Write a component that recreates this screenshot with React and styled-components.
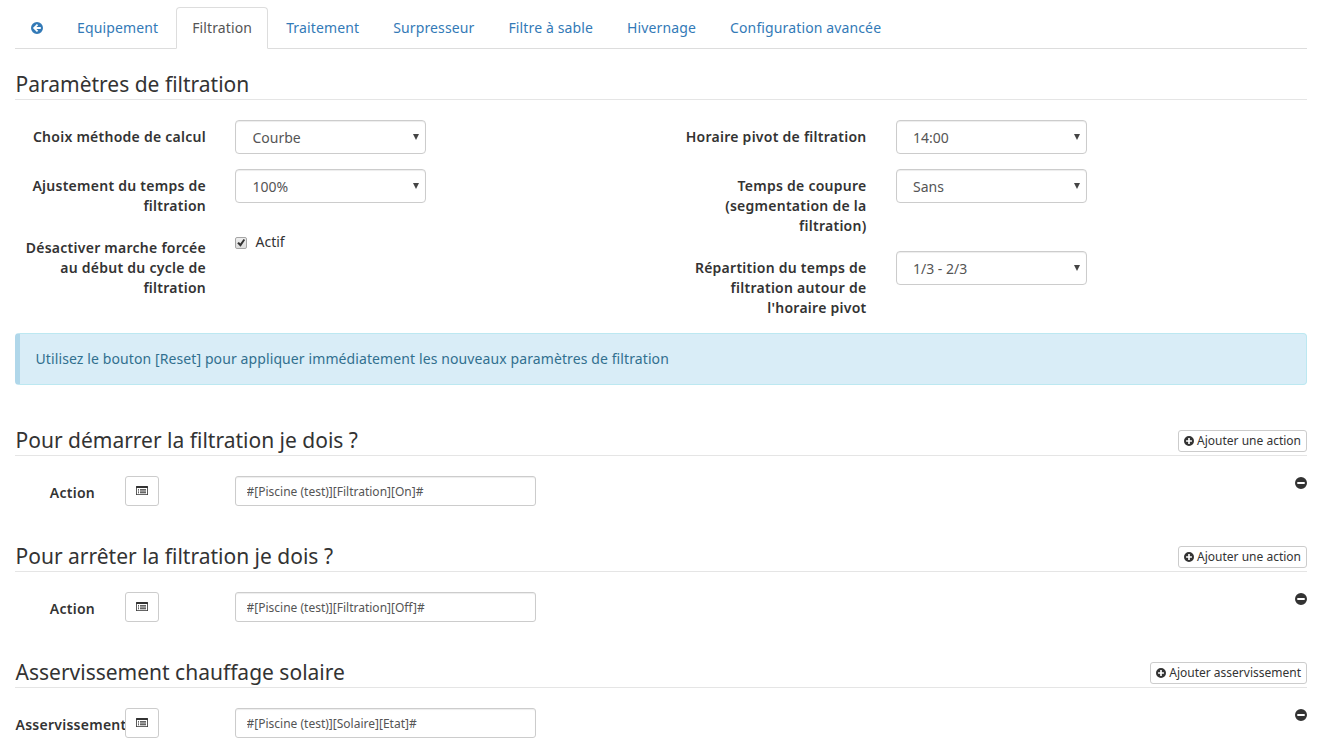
import React from "react";
import styled, { createGlobalStyle } from "styled-components";

const GlobalStyle = createGlobalStyle`
  *, *::before, *::after { box-sizing: border-box; }
  body {
    margin: 0;
    background: #fff;
    color: #333;
    font: 14px/20px "Noto Sans", "Open Sans", sans-serif;
    overflow: hidden;
  }
`;

const Page = styled.main`
  height: 748px;
  padding: 7px 14px 0 15px;
  overflow: hidden;
`;

const Tabs = styled.nav`
  display: flex;
  gap: 2px;
  height: 42px;
  margin-bottom: 20px;
  border-bottom: 1px solid #ddd;
`;

const Tab = styled.a`
  height: 42px;
  padding: 10px 15px;
  border: 1px solid ${(p) => (p.$active ? "#ddd" : "transparent")};
  border-bottom-color: ${(p) => (p.$active ? "#fff" : "transparent")};
  border-radius: 4px 4px 0 0;
  color: ${(p) => (p.$active ? "#555" : "#337ab7")};
  letter-spacing: 0.13px;
  white-space: nowrap;
  text-decoration: none;

  svg { position: relative; top: 1px; }
`;

const Glyph = styled.svg`
  display: inline-block;
  flex: none;
  width: ${(p) => p.$size}px;
  height: ${(p) => p.$size}px;
  fill: currentColor;
`;

const Legend = styled.div`
  display: flex;
  justify-content: space-between;
  align-items: flex-start;
  height: 31px;
  margin-bottom: 20px;
  border-bottom: 1px solid #e5e5e5;
`;

const Title = styled.h2`
  margin: 0;
  padding-left: 0.5px;
  font-size: 21px;
  font-weight: 400;
  line-height: 30px;
  color: #333;
`;

const AddButton = styled.button`
  display: flex;
  align-items: center;
  gap: 3px;
  height: 22px;
  margin-top: 5px;
  padding: 0 5px;
  border: 1px solid #ccc;
  border-radius: 3px;
  background: #fff;
  color: #333;
  font: 12px/18px "Noto Sans", "Open Sans", sans-serif;
  white-space: nowrap;
`;

const Columns = styled.div`
  display: grid;
  grid-template-columns: 1fr 1fr;
  margin: 0 -14px 0 -15px;
`;

const Group = styled.div`
  display: grid;
  grid-template-columns: 220.5px 220.5px;
  margin-bottom: 15px;
`;

const Label = styled.label`
  padding: 7px 14.5px 0 15px;
  font-weight: 600;
  letter-spacing: 0.26px;
  text-align: right;
`;

const Field = styled.div`
  padding: 0 15px 0 14.5px;
`;

const SelectBox = styled.div`
  display: flex;
  justify-content: space-between;
  align-items: center;
  height: 34px;
  padding: 1px 6px 0 16.5px;
  border: 1px solid #ccc;
  border-radius: 4px;
  box-shadow: inset 0 1px 1px rgba(0, 0, 0, 0.075);
  background: #fff;
  color: #555;
`;

const Arrow = styled.span`
  width: 0;
  height: 0;
  margin-top: -1px;
  border: solid transparent;
  border-width: 6px 3px 0;
  border-top-color: #444;
`;

const CheckLine = styled.label`
  display: flex;
  align-items: center;
  gap: 8.5px;
  padding-top: 1px;
`;

const CheckMark = styled.span`
  display: flex;
  width: 12px;
  height: 12px;
  margin-top: 2px;
  border: 1px solid #a5a5a5;
  border-radius: 2px;
  background: linear-gradient(#eee, #ddd);
`;

const Alert = styled.div`
  height: 52px;
  margin-bottom: 40px;
  padding: 15px 15px 15px 15.5px;
  border: 1px solid #bce8f1;
  border-left: 5px solid #b0d7ea;
  border-radius: 4px;
  background: #d9edf7;
  color: #31708f;
  letter-spacing: 0.103px;
`;

const ActionRow = styled.div`
  display: grid;
  grid-template-columns: 80px 110px 301px 1fr;
  column-gap: 0;
  height: 30px;
  margin-bottom: 35px;
`;

const ActionLabel = styled.label`
  display: flex;
  justify-content: ${(p) => (p.$long ? "flex-start" : "flex-end")};
  padding: 7px 0 0 0.5px;
  font-weight: 600;
  letter-spacing: 0.26px;
  white-space: nowrap;
`;

const PickButton = styled.button`
  display: flex;
  align-items: center;
  justify-content: center;
  width: 34px;
  height: 30px;
  margin-left: 30px;
  padding: 0;
  border: 1px solid #ccc;
  border-radius: 3px;
  background: #fff;
  color: #333;

  svg { margin-top: -2px; }
`;

const Command = styled.input`
  width: 301px;
  height: 30px;
  margin-left: 30px;
  padding: 5px 10px 5px 10.5px;
  border: 1px solid #ccc;
  border-radius: 3px;
  box-shadow: inset 0 1px 1px rgba(0, 0, 0, 0.075);
  background: #fff;
  color: #555;
  font: 12px/18px "Noto Sans", "Open Sans", sans-serif;
`;

const Remove = styled.span`
  display: flex;
  justify-self: end;
  padding-top: 1px;
`;

const ArrowCircle = () => (
  <Glyph $size={12} viewBox="0 0 12 12">
    <path fillRule="evenodd" d="M6 0a6 6 0 1 1 0 12A6 6 0 0 1 6 0ZM5.9 1.9 1.9 6l4 4.1 1.3-1.3L5.4 7H9.8V5H5.4l1.8-1.8Z" />
  </Glyph>
);

const PlusCircle = () => (
  <Glyph $size={10} viewBox="0 0 12 12">
    <path fillRule="evenodd" d="M6 0a6 6 0 1 1 0 12A6 6 0 0 1 6 0ZM5 2.5V5H2.5v2H5v2.5h2V7h2.5V5H7V2.5Z" />
  </Glyph>
);

const MinusCircle = () => (
  <Glyph $size={12} viewBox="0 0 12 12">
    <path fillRule="evenodd" d="M6 0a6 6 0 1 1 0 12A6 6 0 0 1 6 0ZM2.3 5v2h7.4V5Z" />
  </Glyph>
);

const ListGlyph = () => (
  <Glyph $size={12} viewBox="0 0 12 12">
    <path fillRule="evenodd" d="M.5 2h11a.5.5 0 0 1 .5.5v8a.5.5 0 0 1-.5.5H.5a.5.5 0 0 1-.5-.5v-8A.5.5 0 0 1 .5 2ZM.8 4v6.2h10.4V4Z" />
    <path d="M2 4.9h1v.9H2zM4 4.9h6v.9H4zM2 6.6h1v.9H2zM4 6.6h6v.9H4zM2 8.3h1v.9H2zM4 8.3h6v.9H4z" />
  </Glyph>
);

const tabs = ["Equipement", "Filtration", "Traitement", "Surpresseur", "Filtre à sable", "Hivernage", "Configuration avancée"];

const Choice = ({ label, value }) => (
  <Group>
    <Label>{label}</Label>
    <Field>
      <SelectBox>
        {value}
        <Arrow />
      </SelectBox>
    </Field>
  </Group>
);

const ActionSection = ({ title, add, label, command, long }) => (
  <section>
    <Legend>
      <Title>{title}</Title>
      <AddButton>
        <PlusCircle />
        {add}
      </AddButton>
    </Legend>
    <ActionRow>
      <ActionLabel $long={long}>{label}</ActionLabel>
      <PickButton>
        <ListGlyph />
      </PickButton>
      <Command defaultValue={command} />
      <Remove>
        <MinusCircle />
      </Remove>
    </ActionRow>
  </section>
);

export default function App() {
  return (
    <Page>
      <GlobalStyle />
      <Tabs>
        <Tab>
          <ArrowCircle />
        </Tab>
        {tabs.map((name) => (
          <Tab key={name} $active={name === "Filtration"}>
            {name}
          </Tab>
        ))}
      </Tabs>
      <Legend>
        <Title>Paramètres de filtration</Title>
      </Legend>
      <Columns>
        <div>
          <Choice label="Choix méthode de calcul" value="Courbe" />
          <Choice label="Ajustement du temps de filtration" value="100%" />
          <Group>
            <Label>Désactiver marche forcée au début du cycle de filtration</Label>
            <Field>
              <CheckLine>
                <CheckMark>
                  <Glyph $size={10} viewBox="0 0 10 10">
                    <path d="M1.2 5.2 2.9 4l1.4 1.6L7.6.9l1.5 1L4.6 8.8Z" />
                  </Glyph>
                </CheckMark>
                Actif
              </CheckLine>
            </Field>
          </Group>
        </div>
        <div>
          <Choice label="Horaire pivot de filtration" value="14:00" />
          <Choice label="Temps de coupure (segmentation de la filtration)" value="Sans" />
          <Choice label="Répartition du temps de filtration autour de l'horaire pivot" value="1/3 - 2/3" />
        </div>
      </Columns>
      <Alert>Utilisez le bouton [Reset] pour appliquer immédiatement les nouveaux paramètres de filtration</Alert>
      <ActionSection title="Pour démarrer la filtration je dois ?" add="Ajouter une action" label="Action" command="#[Piscine (test)][Filtration][On]#" />
      <ActionSection title="Pour arrêter la filtration je dois ?" add="Ajouter une action" label="Action" command="#[Piscine (test)][Filtration][Off]#" />
      <ActionSection title="Asservissement chauffage solaire" add="Ajouter asservissement" label="Asservissement" command="#[Piscine (test)][Solaire][Etat]#" long />
    </Page>
  );
}
